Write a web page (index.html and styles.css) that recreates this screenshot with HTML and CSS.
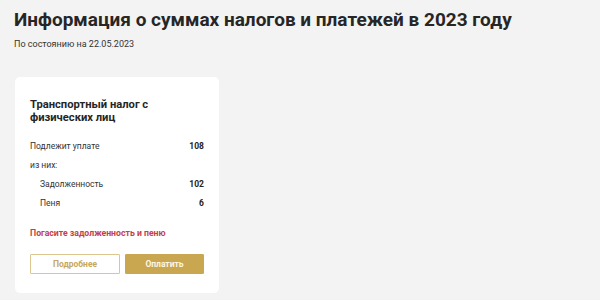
FILE: index.html
```html
<!DOCTYPE html>
<html lang="ru">
<head>
<meta charset="utf-8">
<link rel="stylesheet" href="styles.css">
</head>
<body>
<main class="page">
  <h1 class="page-title">Информация о суммах налогов и платежей в 2023 году</h1>
  <p class="page-date">По состоянию на 22.05.2023</p>
  <section class="card">
    <h2 class="card-title">Транспортный налог с физических лиц</h2>
    <div class="rows">
      <div class="row"><span>Подлежит уплате</span><b>108</b></div>
      <div class="row"><span>из них:</span></div>
      <div class="row sub"><span>Задолженность</span><b>102</b></div>
      <div class="row sub"><span>Пеня</span><b>6</b></div>
    </div>
    <p class="warn">Погасите задолженность и пеню</p>
    <div class="actions">
      <button class="btn btn-outline">Подробнее</button>
      <button class="btn btn-fill">Оплатить</button>
    </div>
  </section>
</main>
</body>
</html>
```
FILE: styles.css
```css
html, body {
  margin: 0;
  padding: 0;
  background: #f3f3f3;
  font-family: Roboto, "Liberation Sans", Arial, sans-serif;
  color: #232323;
}
.page {
  padding: 8px 14px;
}
.page-title {
  margin: 0;
  font-size: 19px;
  line-height: 24px;
  font-weight: 700;
  color: #262626;
}
.page-date {
  margin: 6px 0 0;
  font-size: 9px;
  line-height: 12px;
  color: #333;
}
.card {
  margin-top: 27px;
  margin-left: 1px;
  width: 204px;
  box-sizing: border-box;
  background: #fff;
  border-radius: 5px;
  padding: 21px 15px 19px;
}
.card-title {
  margin: 0;
  font-size: 11.2px;
  line-height: 13px;
  font-weight: 700;
  color: #262626;
}
.rows {
  margin-top: 12px;
  display: flex;
  flex-direction: column;
}
.row {
  display: flex;
  justify-content: space-between;
  align-items: center;
  height: 19px;
  font-size: 8.5px;
  color: #333;
}
.row b {
  font-weight: 700;
  color: #222;
}
.row.sub {
  padding-left: 10px;
}
.warn {
  margin: 15px 0 0;
  font-size: 8.7px;
  line-height: 12px;
  font-weight: 700;
  color: #c4404a;
}
.actions {
  margin-top: 15px;
  display: flex;
  gap: 5px;
}
.btn {
  height: 20px;
  font-family: inherit;
  font-size: 8.5px;
  font-weight: 700;
  border-radius: 1px;
  padding: 0;
  cursor: pointer;
}
.btn-outline {
  width: 90px;
  background: #fff;
  border: 1px solid #dcc68f;
  color: #c7a75c;
}
.btn-fill {
  flex: 1;
  background: #c9a650;
  border: 1px solid #c9a650;
  color: #fdf6e3;
}
```
